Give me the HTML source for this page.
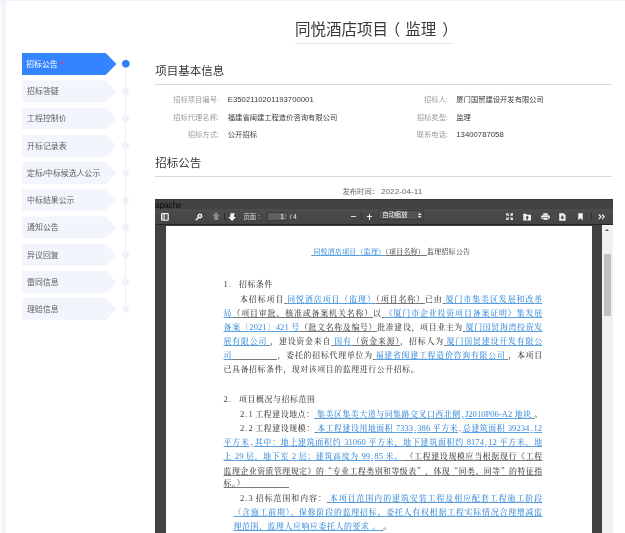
<!DOCTYPE html>
<html lang="zh-CN">
<head>
<meta charset="utf-8">
<title>同悦酒店项目（监理）</title>
<style>
html,body{margin:0;padding:0;}
body{width:625px;height:533px;overflow:hidden;background:#f1f5fb;position:relative;will-change:transform;
  font-family:"Liberation Sans","Noto Sans CJK SC",sans-serif;color:#333;}
.abs{position:absolute;}
#card{position:absolute;left:5.5px;top:1px;width:625px;height:540px;background:#fff;border-top-left-radius:3px;}
.nav{position:absolute;left:22px;width:94.5px;height:22px;background:#f2f6fc;
  clip-path:polygon(0 0,83.7px 0,100% 50%,83.7px 100%,0 100%);
  font-size:7.9px;line-height:23.6px;color:#5e5e5e;overflow:hidden;box-sizing:border-box;padding-left:5.1px;white-space:nowrap;}
.nav.on{background:#3484ff;color:#fff;padding-left:4.2px;}
.nav.on i{color:#e8384f;font-style:normal;font-size:9.4px;position:relative;top:0.3px;left:0.1px;line-height:1px;}
#tlsvg{position:absolute;left:118px;top:50px;}
#title{position:absolute;left:295px;top:18.7px;width:157px;height:24.3px;border-bottom:1px solid #e6e6e6;
  font-size:15.5px;line-height:22px;text-align:left;color:#383838;font-weight:400;white-space:nowrap;}
#title span{position:relative;}
.sec{position:absolute;left:155.3px;width:457px;border-bottom:1px solid #d9d9d9;font-size:11.5px;color:#383838;font-weight:400;white-space:nowrap;}
.lab{position:absolute;font-size:7.3px;line-height:12px;color:#9a9a9a;text-align:right;white-space:nowrap;}
.val{position:absolute;font-size:7.3px;line-height:12px;color:#3a3a3a;white-space:nowrap;}
.val b{font-weight:normal;font-size:7.75px;}
#viewer{position:absolute;left:155.2px;top:199px;width:457.5px;height:340px;background:#424242;overflow:hidden;box-shadow:inset 0 0.9px 0 #383838;}
#apache{position:absolute;left:0.2px;top:0.8px;font-size:8.4px;line-height:10px;color:#0c0c0c;display:inline-block;transform-origin:0 50%;transform:scale(0.975,1.12);}
#tb{position:absolute;left:0;top:9.9px;width:100%;height:15.2px;background:linear-gradient(#4c4c4c,#444444);
  box-shadow:0 0.6px 1px rgba(0,0,0,.45);}
#page{position:absolute;left:10.4px;top:26.6px;width:426.3px;height:320px;background:#fff;}
#sb{position:absolute;left:447.3px;top:26px;width:10.2px;height:320px;background:#f1f1f1;}
#sb .th{position:absolute;left:1.2px;top:29px;width:7.6px;height:61.5px;background:#c1c1c1;}
#sb .ar{position:absolute;left:2.7px;top:3.8px;width:0;height:0;border-left:2.4px solid transparent;border-right:2.4px solid transparent;border-bottom:2.6px solid #505050;}
.tbt{position:absolute;color:#f0f0f0;font-size:6.3px;line-height:15.7px;white-space:nowrap;}
.pl{position:absolute;left:58px;width:318.6px;font-family:"Liberation Serif","Noto Serif CJK SC",serif;font-size:7.9px;line-height:14px;height:14px;
  color:#444;font-weight:500;white-space:nowrap;text-align:justify;text-align-last:justify;}
.pl u{color:#3a8ad9;text-decoration:underline;text-decoration-thickness:0.55px;text-underline-offset:1px;text-decoration-color:#5a9fe0;}
.pl s{text-decoration:underline;text-decoration-thickness:0.55px;text-underline-offset:1px;text-decoration-color:#777;}
.pl.nj{text-align:left;text-align-last:left;letter-spacing:0.62px;}
.pl em{font-style:normal;display:inline-block;}
.pl b{font-weight:normal;font-size:8.6px;letter-spacing:0;line-height:1px;}
.pl b i{font-style:normal;padding:0 1.05px;}
.pl q{quotes:none;font-family:"Noto Serif CJK SC",serif;}
.pl q:before,.pl q:after{content:none;}
.pl .bl{display:inline-block;overflow:hidden;vertical-align:bottom;height:14px;}
</style>
</head>
<body>
<div class="abs" style="left:0;top:0;width:1px;height:533px;background:#f7f9fc"></div><div class="abs" style="left:1px;top:1px;width:1px;height:533px;background:#fbfcfe"></div>
<div id="card"></div>
<div class="nav on" style="top:52.9px">招标公告 <i>*</i></div>
<div class="nav" style="top:80.2px">招标答疑</div>
<div class="nav" style="top:107.4px">工程控制价</div>
<div class="nav" style="top:134.7px">开标记录表</div>
<div class="nav" style="top:161.9px">定标/中标候选人公示</div>
<div class="nav" style="top:189.2px">中标结果公示</div>
<div class="nav" style="top:216.4px">通知公告</div>
<div class="nav" style="top:243.7px">异议回复</div>
<div class="nav" style="top:270.9px">雷同信息</div>
<div class="nav" style="top:298.1px">理赔信息</div>
<svg id="tlsvg" width="16" height="270" viewBox="0 0 16 270"><rect x="7.1" y="6" width="1" height="254" fill="#ebeff6"/><circle cx="7.8" cy="13.7" r="3.8" fill="#2f7cf6"/><circle cx="7.6" cy="41.2" r="3.5" fill="#eef3fa"/><circle cx="7.6" cy="68.4" r="3.5" fill="#eef3fa"/><circle cx="7.6" cy="95.7" r="3.5" fill="#eef3fa"/><circle cx="7.6" cy="122.9" r="3.5" fill="#eef3fa"/><circle cx="7.6" cy="150.2" r="3.5" fill="#eef3fa"/><circle cx="7.6" cy="177.4" r="3.5" fill="#eef3fa"/><circle cx="7.6" cy="204.7" r="3.5" fill="#eef3fa"/><circle cx="7.6" cy="231.9" r="3.5" fill="#eef3fa"/><circle cx="7.6" cy="259.1" r="3.5" fill="#eef3fa"/></svg>
<div id="title">同悦酒店项目<span style="left:-3.2px">（</span><span style="left:1.6px">监理</span><span style="left:7.6px">）</span></div>

<div class="sec" style="top:62px;height:22px;line-height:19px">项目基本信息</div>
<div class="lab" style="left:150px;width:69px;top:93.6px">招标项目编号:</div>
<div class="val" style="left:227.8px;top:93.6px"><b>E3502110201193700001</b></div>
<div class="lab" style="left:150px;width:69px;top:111.9px">招标代理名称:</div>
<div class="val" style="left:227.8px;top:111.9px">福建省闽建工程造价咨询有限公司</div>
<div class="lab" style="left:150px;width:69px;top:129.4px">招标方式:</div>
<div class="val" style="left:227.8px;top:129.4px">公开招标</div>
<div class="lab" style="left:379px;width:69px;top:93.6px">招标人:</div>
<div class="val" style="left:456.3px;top:93.6px">厦门国贸建设开发有限公司</div>
<div class="lab" style="left:379px;width:69px;top:111.9px">招标类型:</div>
<div class="val" style="left:456.3px;top:111.9px">监理</div>
<div class="lab" style="left:379px;width:69px;top:129.4px">联系电话:</div>
<div class="val" style="left:456.3px;top:129.4px"><b>13400787058</b></div>

<div class="sec" style="top:154.1px;height:22px;line-height:19px">招标公告</div>
<div class="val" style="left:342.5px;top:185.7px;color:#6a6a6a">发布时间： <b style="font-size:8.1px;letter-spacing:0.05px">2022-04-11</b></div>
<div id="viewer">
  <div id="apache">apache</div>
  <div id="tb">
    <svg class="abs" style="left:5.6px;top:3.8px" width="7.8" height="7.9" viewBox="0 0 16 16"><rect x="0" y="0" width="16" height="16" rx="3" fill="#f4f4f4"/><rect x="2.2" y="2.4" width="3.6" height="11.2" fill="#8e8e8e"/><rect x="7.4" y="2.4" width="6.2" height="11.2" fill="#565656"/></svg>
    <svg class="abs" style="left:39.9px;top:4px" width="8" height="8" viewBox="0 0 16 16"><circle cx="9.8" cy="5.9" r="3.4" fill="none" stroke="#f2f2f2" stroke-width="3"/><path d="M7 9 L2.6 13.4" stroke="#f2f2f2" stroke-width="3.2" stroke-linecap="round"/></svg>
    <svg class="abs" style="left:57.1px;top:3.5px" width="8.2" height="8.2" viewBox="0 0 16 16"><path d="M8 0.3 L15.7 8.3 H11.6 C11.6 11.5 12 13.5 13.6 15.7 H5.2 C4.4 13.5 4.4 11 4.4 8.3 H0.3 Z" fill="#8a8a8a"/></svg>
    <div class="abs" style="left:69px;top:4.4px;width:0.8px;height:6.6px;background:#2c2c2c"></div>
    <svg class="abs" style="left:72.9px;top:3.8px" width="8.2" height="8.2" viewBox="0 0 16 16"><path d="M8 15.7 L15.7 7.7 H11.6 C11.6 4.5 12 2.5 13.6 0.3 H5.2 C4.4 2.5 4.4 5 4.4 7.7 H0.3 Z" fill="#f6f6f6"/></svg>
    <div class="tbt" style="left:88.3px;top:0;color:#dcdcdc">页面<span style="margin-left:1.4px">：</span></div>
    <div class="abs" style="left:112.2px;top:2.8px;width:20.8px;height:9.2px;box-sizing:border-box;border:0.6px solid #3a3a3a;border-radius:1px;background:#606060;color:#fafafa;font-size:6.5px;line-height:8px;text-align:right;padding-right:3.2px">1</div>
    <div class="tbt" style="left:134.6px;top:0">/ 4</div>
    <div class="abs" style="left:195.4px;top:7.3px;width:5.2px;height:1.3px;background:#dedede"></div>
    <div class="abs" style="left:206.3px;top:4.4px;width:0.8px;height:6.6px;background:#2c2c2c"></div>
    <div class="abs" style="left:211.4px;top:7.3px;width:5.4px;height:1.3px;background:#f0f0f0"></div>
    <div class="abs" style="left:213.45px;top:5.2px;width:1.3px;height:5.5px;background:#f0f0f0"></div>
    <div class="abs" style="left:222.8px;top:1.6px;width:45.8px;height:9.8px;box-sizing:border-box;border:0.6px solid #393939;border-radius:1px;background:#525252;color:#fafafa;font-size:6.35px;line-height:8.6px;padding-left:3.2px;white-space:nowrap">自动缩放</div>
    <svg class="abs" style="left:262.9px;top:4.2px" width="3.4" height="4.8" viewBox="0 0 7 10"><path d="M3.5 0 L7 4 H0 Z M3.5 10 L7 6 H0 Z" fill="#ffffff"/></svg>
    <svg class="abs" style="left:350.6px;top:4px" width="7.2" height="7.2" viewBox="0 0 16 16"><path d="M0.5 0.5 H6.5 L4.5 2.5 L7 5 L5 7 L2.5 4.5 L0.5 6.5 Z M15.5 0.5 V6.5 L13.5 4.5 L11 7 L9 5 L11.5 2.5 L9.5 0.5 Z M0.5 15.5 V9.5 L2.5 11.5 L5 9 L7 11 L4.5 13.5 L6.5 15.5 Z M15.5 15.5 H9.5 L11.5 13.5 L9 11 L11 9 L13.5 11.5 L15.5 9.5 Z" fill="#f2f2f2"/></svg>
    <svg class="abs" style="left:367.9px;top:3.9px" width="8.4" height="7.8" viewBox="0 0 18 16"><path d="M0.5 1.5 H7 L8.5 3.5 H17.5 V15.5 H0.5 Z" fill="#f0f0f0"/><path d="M9 5.5 L13.2 10 H10.6 V14 H7.4 V10 H4.8 Z" fill="#454545"/></svg>
    <svg class="abs" style="left:385.6px;top:4px" width="9" height="7.4" viewBox="0 0 18 15"><path d="M4.5 0.5 H13.5 V4 H4.5 Z" fill="#f2f2f2"/><rect x="0.5" y="4.5" width="17" height="7.5" rx="2" fill="#f2f2f2"/><rect x="4" y="9" width="10" height="5.5" fill="#f2f2f2" stroke="#454545" stroke-width="1.2"/></svg>
    <svg class="abs" style="left:404.2px;top:3.8px" width="6.8" height="8" viewBox="0 0 14 16"><path d="M0.5 0.5 H9.5 L13.5 4.5 V15.5 H0.5 Z" fill="#f2f2f2"/><path d="M7 13 L2.8 8.5 H5.4 V5 H8.6 V8.5 H11.2 Z" fill="#454545"/></svg>
    <svg class="abs" style="left:422.7px;top:3.9px" width="5" height="7.6" viewBox="0 0 10 15"><path d="M0.5 0.5 H9.5 V14.5 L5 10.5 L0.5 14.5 Z" fill="#f4f4f4"/></svg>
    <div class="abs" style="left:436px;top:4.4px;width:0.8px;height:6.6px;background:#2c2c2c"></div>
    <svg class="abs" style="left:443px;top:5.2px" width="7.6" height="5.6" viewBox="0 0 15 11"><path d="M1.5 1 L6 5.5 L1.5 10 M8 1 L12.5 5.5 L8 10" fill="none" stroke="#f2f2f2" stroke-width="2.2"/></svg>
  </div>
  <div id="page">
    <div class="pl nj" style="top:19.40px;left:145.8px;width:auto;font-size:6.9px;letter-spacing:0.3px"><s>&nbsp;</s><u>同悦酒店项目（监理）</u><s>（项目名称）&nbsp;</s>监理招标公告</div>
    <div class="pl nj" style="top:52.10px"><em style="width:15.3px"><b>1<i>.</i></b></em>招标条件</div>
    <div class="pl" style="top:67.90px;left:74.4px;width:302.2px">本招标项目<s>&nbsp;</s><u>同悦酒店项目（监理）</u><s>（项目名称）</s>已由<s>&nbsp;</s><u>厦门市集美区发展和改革</u></div>
    <div class="pl" style="top:81.85px"><u>局</u><s>（项目审批、核准或备案机关名称）</s>以<s>&nbsp;</s><u>《厦门市企业投资项目备案证明》集发展</u></div>
    <div class="pl" style="top:95.80px"><u>备案〔<b>2021</b>〕<b>421</b> 号</u><s>（批文名称及编号）</s>批准建设，项目业主为<s>&nbsp;</s><u>厦门国贸海湾投资发</u></div>
    <div class="pl" style="top:109.75px"><u>展有限公司</u><s>&nbsp;</s>，建设资金来自<s>&nbsp;</s><u>国有</u><s>（资金来源）</s>，招标人为<s>&nbsp;</s><u>厦门国贸建设开发有限公</u></div>
    <div class="pl" style="top:123.70px"><u>司</u><s class="bl" style="width:44.6px">&nbsp;&nbsp;&nbsp;&nbsp;&nbsp;&nbsp;&nbsp;&nbsp;&nbsp;&nbsp;&nbsp;&nbsp;&nbsp;&nbsp;&nbsp;&nbsp;&nbsp;&nbsp;&nbsp;&nbsp;&nbsp;&nbsp;&nbsp;&nbsp;&nbsp;&nbsp;&nbsp;&nbsp;&nbsp;&nbsp;&nbsp;&nbsp;&nbsp;&nbsp;&nbsp;&nbsp;&nbsp;&nbsp;&nbsp;&nbsp;</s>，委托的招标代理单位为<s>&nbsp;</s><u>福建省闽建工程造价咨询有限公司</u><s>&nbsp;</s>，本项目</div>
    <div class="pl nj" style="top:137.65px">已具备招标条件，现对该项目的监理进行公开招标。</div>
    <div class="pl nj" style="top:167.00px"><em style="width:15.3px"><b>2<i>.</i></b></em>项目概况与招标范围</div>
    <div class="pl" style="top:182.20px;left:74.4px;width:302.2px"><b>2<i>.</i>1</b> 工程建设地点：<s>&nbsp;</s><u>集美区集美大道与同集路交叉口西北侧<b><i>,</i></b><b>J2010P06-A2</b> 地块</u><s>&nbsp;</s>。</div>
    <div class="pl" style="top:196.20px;left:74.4px;width:302.2px"><b>2<i>.</i>2</b> 工程建设规模：<s>&nbsp;</s><u>本工程建设用地面积 <b>7333<i>.</i>386</b> 平方米<b><i>,</i></b>总建筑面积 <b>39234<i>.</i>12</b></u></div>
    <div class="pl" style="top:210.10px"><u>平方米<b><i>,</i></b>其中：地上建筑面积约 <b>31060</b> 平方米，地下建筑面积约 <b>8174<i>.</i>12</b> 平方米，地</u></div>
    <div class="pl" style="top:224.00px"><u>上 <b>29</b> 层，地下室 <b>2</b> 层；建筑高度为 <b>99<i>.</i>85</b> 米。</u><s>&nbsp;（工程建设规模应当根据现行《工程</s></div>
    <div class="pl" style="top:237.95px"><s>监理企业资质管理规定》的<q>“</q>专业工程类别和等级表<q>”</q>，体现<q>“</q>同类、同等<q>”</q>的特征指</s></div>
    <div class="pl nj" style="top:251.90px"><s>标。）</s><s class="bl" style="width:44px">&nbsp;&nbsp;&nbsp;&nbsp;&nbsp;&nbsp;&nbsp;&nbsp;&nbsp;&nbsp;&nbsp;&nbsp;&nbsp;&nbsp;&nbsp;&nbsp;&nbsp;&nbsp;&nbsp;&nbsp;&nbsp;&nbsp;&nbsp;&nbsp;&nbsp;&nbsp;&nbsp;&nbsp;&nbsp;&nbsp;&nbsp;&nbsp;&nbsp;&nbsp;&nbsp;&nbsp;&nbsp;&nbsp;&nbsp;&nbsp;</s></div>
    <div class="pl" style="top:266.30px;left:74.4px;width:302.2px"><b>2<i>.</i>3</b> 招标范围和内容：<s>&nbsp;</s><u>本项目范围内的建筑安装工程及相应配套工程施工阶段</u></div>
    <div class="pl" style="top:280.40px;left:67.8px;width:308.8px"><u>（含施工前期）、保修阶段的监理招标。委托人有权根据工程实际情况合理增减监</u></div>
    <div class="pl nj" style="top:294.30px;left:67.8px"><u>理范围，监理人应响应委托人的要求 。</u><s>&nbsp;</s>。</div>
  </div>
  <div id="sb"><div class="ar"></div><div class="th"></div></div>
</div>
</body>
</html>
